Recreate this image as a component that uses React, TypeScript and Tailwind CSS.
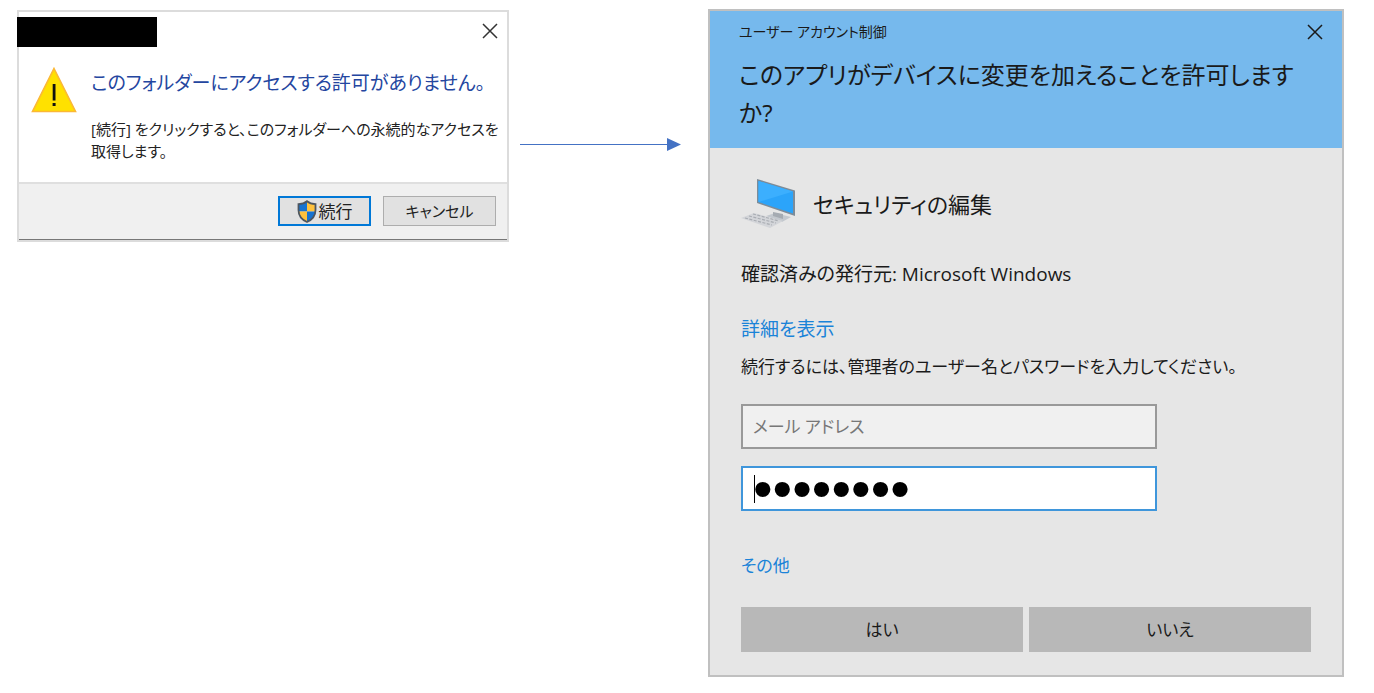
import React from 'react';

const CloseIcon = () => (
  <svg width="16" height="16" viewBox="0 0 16 16" fill="none" stroke="currentColor" strokeWidth="1.5" aria-hidden="true">
    <path d="M1 1L15 15M15 1L1 15" />
  </svg>
);

const WarningIcon = () => (
  <svg width="46" height="46" viewBox="0 0 46 46" className="shrink-0" aria-hidden="true">
    <path d="M23 1.5L44.5 44.5H1.5Z" fill="#ffe100" stroke="#fbb836" strokeWidth="1.6" />
    <path d="M21.7 17h2.8v16.5h-2.8zM21.6 36h3v3h-3z" fill="#111" />
  </svg>
);

const ShieldIcon = () => (
  <svg width="20" height="23" viewBox="0 0 20 23" className="shrink-0" aria-hidden="true">
    <path d="M1.5 4.1V11.5H10V1.2C8 2.9 4.8 4 1.5 4.1Z" fill="#1773d0" />
    <path d="M10 1.2C12 2.9 15.2 4 18.5 4.1V11.5H10Z" fill="#ffc23d" />
    <path d="M1.5 11.5C1.9 16.5 5 19.8 10 22V11.5Z" fill="#ffc23d" />
    <path d="M18.5 11.5C18.1 16.5 15 19.8 10 22V11.5Z" fill="#1773d0" />
    <path
      d="M10 1.2C8 2.9 4.8 4 1.5 4.1V10C1.5 16 5 19.8 10 22C15 19.8 18.5 16 18.5 10V4.1C15.2 4 12 2.9 10 1.2Z"
      fill="none"
      stroke="#4d5660"
      strokeWidth="1.8"
    />
  </svg>
);

const ComputerIcon = () => (
  <svg width="56" height="52" viewBox="0 0 56 52" className="shrink-0" aria-hidden="true">
    <path d="M25 38L34 35L50 39L41 44Z" fill="#c3c8ce" />
    <path d="M32 34L42 36V41L32 38Z" fill="#a5abb2" />
    <path d="M16 1L54 12.5V38L16 25Z" fill="#7d8c99" />
    <path d="M17.5 3L52 13.5V35.5L17.5 24Z" fill="#2ba4fa" />
    <path d="M17.5 3L52 13.5L17.5 24Z" fill="#3caffe" />
    <path d="M0 40L13 35L42 43L29 50Z" fill="#d3d5d9" />
    <path d="M4 40L31 47M8 38L35 45M12 36L38 43" stroke="#a9adb3" strokeWidth="1.2" strokeDasharray="3 1.5" />
  </svg>
);

const FlowArrow = () => (
  <div className="mt-[138px] flex items-center px-[11px]" aria-hidden="true">
    <div className="h-px grow bg-[#4472c4]" />
    <svg width="14" height="13" viewBox="0 0 14 13" fill="#4472c4" className="shrink-0">
      <path d="M0 0L14 6.5L0 13Z" />
    </svg>
    <div className="w-4 shrink-0" />
  </div>
);

const FolderAccessDialog = () => (
  <section className="mt-[10px] border-2 border-[#dcdcdc] bg-white">
    <header className="flex justify-between pt-[5px] pr-[9px]">
      <div className="-ml-[2px] h-[30px] w-[140px] bg-black" />
      <button type="button" aria-label="閉じる" className="mt-[6px] h-4 text-[#333]">
        <CloseIcon />
      </button>
    </header>
    <div className="flex gap-[14px] pt-5 pb-5 pl-3">
      <WarningIcon />
      <div className="whitespace-nowrap">
        <h1 className="text-[19px] leading-8 text-[#24469f]">このフォルダーにアクセスする許可がありません。</h1>
        <p className="mt-[19px] text-[15px] leading-[22px] text-[#222]">
          [続行] をクリックすると、このフォルダーへの永続的なアクセスを
          <br />
          取得します。
        </p>
      </div>
    </div>
    <footer className="flex justify-end gap-3 border-t-2 border-b border-t-[#dfdfdf] border-b-[#777] bg-[#f0f0f0] pt-3 pr-[11px] pb-[13px]">
      <button type="button" className="flex h-[30px] w-[93px] items-center justify-center gap-[2px] border-2 border-[#0078d7] bg-[#e1e1e1] text-[17px] leading-none text-[#222]">
        <ShieldIcon />
        続行
      </button>
      <button type="button" className="h-[30px] w-[113px] border border-[#adadad] bg-[#e1e1e1] text-[15px] leading-none text-[#222]">
        キャンセル
      </button>
    </footer>
  </section>
);

const UacDialog = () => (
  <section className="mt-[9px] border-2 border-[#c0c0c0] bg-[#e6e6e6] text-[#1a1a1a]">
    <header className="h-[137px] bg-[#76b9ed] pt-[9px] pr-[19px] pl-[29px]">
      <div className="flex items-center justify-between">
        <span className="text-[14px] leading-6">ユーザー アカウント制御</span>
        <button type="button" aria-label="閉じる" className="h-4">
          <CloseIcon />
        </button>
      </div>
      <h2 className="mt-3 text-[24px] leading-[38px] whitespace-nowrap">
        このアプリがデバイスに変更を加えることを許可します
        <br />
        か?
      </h2>
    </header>
    <form className="px-[31px] pt-[30px] pb-[23px] text-[17px] leading-7" onSubmit={(e) => e.preventDefault()}>
      <div className="flex items-center gap-4">
        <ComputerIcon />
        <span className="text-[22px] leading-8">セキュリティの編集</span>
      </div>
      <p className="mt-[30px] text-[19px] leading-7">確認済みの発行元: Microsoft Windows</p>
      <a href="#details" className="mt-[27px] block text-[19px] leading-7 text-[#1a83d8]">詳細を表示</a>
      <p className="mt-[10px] whitespace-nowrap">続行するには、管理者のユーザー名とパスワードを入力してください。</p>
      <div className="mt-[23px] mr-[154px] flex flex-col gap-[17px]">
        <input
          type="email"
          aria-label="メール アドレス"
          placeholder="メール アドレス"
          className="h-[45px] w-full border-2 border-[#999] bg-[#f0f0f0] px-[10px] outline-none placeholder:text-[#777]"
        />
        <div className="relative">
          <input
            type="password"
            aria-label="パスワード"
            defaultValue="password"
            className="block h-[45px] w-full border-2 border-[#3f96db] bg-white px-[10px] font-['Liberation_Sans'] text-[56px] leading-10 text-black outline-none"
          />
          <span className="absolute top-[9px] left-[13px] h-7 w-px bg-black" />
        </div>
      </div>
      <a href="#more" className="mt-[41px] block text-[#1a83d8]">その他</a>
      <div className="mt-[27px] flex gap-[6px]">
        <button type="submit" className="h-[45px] flex-1 bg-[#b8b8b8]">はい</button>
        <button type="button" className="h-[45px] flex-1 bg-[#b8b8b8]">いいえ</button>
      </div>
    </form>
  </section>
);

export default function App() {
  return (
    <main
      lang="ja"
      className="grid min-h-screen grid-cols-[minmax(0,492fr)_minmax(0,199fr)_minmax(0,636fr)] items-start bg-white pr-[30px] pl-[17px] font-['Open_Sans','Noto_Sans_CJK_JP',sans-serif] [font-feature-settings:'palt']"
    >
      <FolderAccessDialog />
      <FlowArrow />
      <UacDialog />
    </main>
  );
}
